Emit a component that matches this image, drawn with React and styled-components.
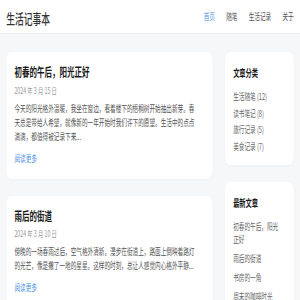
import styled, { createGlobalStyle } from "styled-components";

const GlobalStyle = createGlobalStyle`
  html, body {
    margin: 0;
    padding: 0;
    overflow: hidden;
    background: #f6f7f9;
  }
  body {
    font-family: "Noto Sans CJK SC", "Noto Sans", sans-serif;
    color: #333;
  }
`;

const posts = [
  {
    title: "初春的午后，阳光正好",
    date: "2024 年 3 月 15 日",
    excerpt:
      "今天的阳光格外温暖，我坐在窗边，看着楼下的梧桐树开始抽出新芽。春天总是带给人希望，就像新的一年开始时我们许下的愿望。生活中的点点滴滴，都值得被记录下来...",
  },
  {
    title: "雨后的街道",
    date: "2024 年 3 月 10 日",
    excerpt:
      "傍晚的一场春雨过后，空气格外清新。漫步在街道上，路面上倒映着路灯的光芒，像是撒了一地的星星。这样的时刻，总让人感觉内心格外平静...",
  },
];

const categories = [
  { name: "生活随笔", count: 12 },
  { name: "读书笔记", count: 8 },
  { name: "旅行记录", count: 5 },
  { name: "美食记录", count: 7 },
];

const latest = ["初春的午后，阳光正好", "雨后的街道", "书房的一角", "周末的咖啡时光"];

const navItems = ["首页", "随笔", "生活记录", "关于"];

export default function App() {
  return (
    <>
      <GlobalStyle />
      <Styled.Viewport>
        <Styled.Header>
          <Styled.Logo>生活记事本</Styled.Logo>
          <Styled.Nav>
            {navItems.map((item, i) => (
              <Styled.NavLink key={item} $active={i === 0}>
                {item}
              </Styled.NavLink>
            ))}
          </Styled.Nav>
        </Styled.Header>

        <Styled.Main>
          <Styled.Posts>
            {posts.map((post) => (
              <Styled.PostCard key={post.title}>
                <Styled.PostTitle>{post.title}</Styled.PostTitle>
                <Styled.PostDate>{post.date}</Styled.PostDate>
                <Styled.Excerpt>{post.excerpt}</Styled.Excerpt>
                <Styled.ReadMore>阅读更多</Styled.ReadMore>
              </Styled.PostCard>
            ))}
          </Styled.Posts>

          <Styled.Sidebar>
            <Styled.Widget>
              <Styled.WidgetTitle>文章分类</Styled.WidgetTitle>
              <Styled.List $spacing={3.5}>
                {categories.map((c) => (
                  <li key={c.name}>
                    {c.name} ({c.count})
                  </li>
                ))}
              </Styled.List>
            </Styled.Widget>

            <Styled.Widget>
              <Styled.WidgetTitle>最新文章</Styled.WidgetTitle>
              <Styled.List $spacing={6} $maxWidth={74}>
                {latest.map((t) => (
                  <li key={t}>{t}</li>
                ))}
              </Styled.List>
            </Styled.Widget>
          </Styled.Sidebar>
        </Styled.Main>
      </Styled.Viewport>
    </>
  );
}

const Styled = {
  Viewport: styled.div`
    width: 480px;
    transform: scaleX(0.625);
    transform-origin: 0 0;
  `,

  Header: styled.header`
    height: 33px;
    padding: 0 10px;
    background: #fff;
    border-bottom: 1px solid #ededed;
    display: flex;
    align-items: center;
    justify-content: space-between;
  `,

  Logo: styled.h1`
    margin: 2px 0 0;
    font-size: 14px;
    font-weight: 500;
    color: #333;
  `,

  Nav: styled.nav`
    display: flex;
    gap: 18px;
  `,

  NavLink: styled.a`
    font-size: 9px;
    color: ${({ $active }) => ($active ? "#4a90e2" : "#555")};
    cursor: pointer;
  `,

  Main: styled.main`
    display: grid;
    grid-template-columns: 1fr 110px;
    gap: 20px;
    padding: 18px 10px;
    align-items: start;
  `,

  Posts: styled.div`
    display: flex;
    flex-direction: column;
    gap: 17px;
  `,

  PostCard: styled.article`
    background: #fff;
    border-radius: 8px;
    padding: 12px 22px 13px 13px;
    box-shadow: 0 1px 3px rgba(0, 0, 0, 0.03);
  `,

  PostTitle: styled.h2`
    margin: 0 0 3.5px;
    font-size: 12px;
    line-height: 16px;
    font-weight: 700;
    color: #1a1a1a;
  `,

  PostDate: styled.div`
    font-size: 8.5px;
    line-height: 12px;
    color: #999;
    margin-bottom: 6px;
  `,

  Excerpt: styled.p`
    margin: 0 0 8px;
    font-size: 9px;
    line-height: 14px;
    color: #555;
  `,

  ReadMore: styled.a`
    display: block;
    font-size: 9px;
    line-height: 14px;
    color: #4a90e2;
    cursor: pointer;
  `,

  Sidebar: styled.aside`
    display: flex;
    flex-direction: column;
    gap: 17px;
  `,

  Widget: styled.section`
    background: #fff;
    border-radius: 8px;
    padding: 14px 16px 12px 13px;
    box-shadow: 0 1px 3px rgba(0, 0, 0, 0.03);
  `,

  WidgetTitle: styled.h3`
    margin: 0 0 10px;
    font-size: 10px;
    line-height: 14px;
    font-weight: 700;
    color: #1a1a1a;
  `,

  List: styled.ul`
    list-style: none;
    margin: 0;
    padding: 0;

    li {
      font-size: 9px;
      line-height: 13px;
      color: #666;
      max-width: ${({ $maxWidth }) => ($maxWidth ? `${$maxWidth}px` : "none")};
      margin-bottom: ${({ $spacing }) => $spacing}px;
    }

    li:last-child {
      margin-bottom: 0;
    }
  `,
};
